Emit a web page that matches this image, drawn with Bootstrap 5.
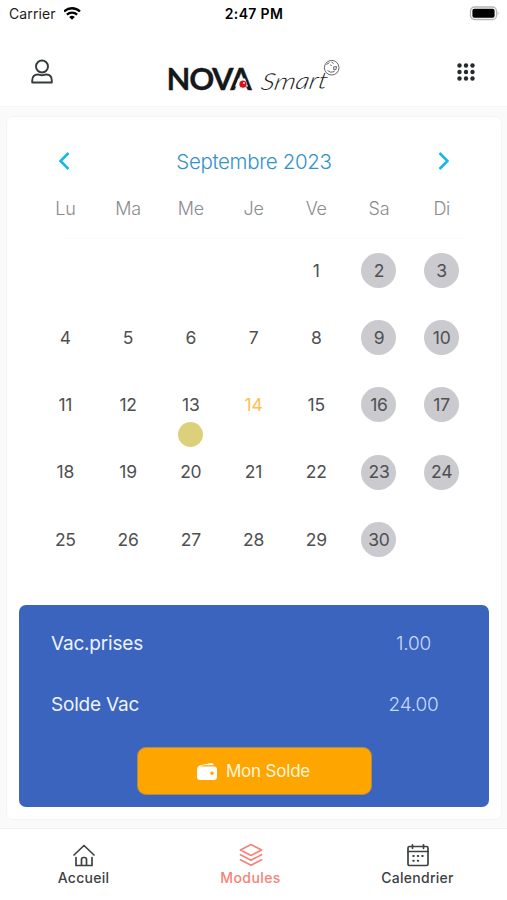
<!DOCTYPE html>
<html lang="fr">
<head>
<meta charset="utf-8">
<meta name="viewport" content="width=device-width, initial-scale=1">
<title>Nova Smart</title>
<link href="https://cdn.jsdelivr.net/npm/bootstrap@5.3.0/dist/css/bootstrap.min.css" rel="stylesheet">
<style>
body{font-family:Inter,"Liberation Sans",sans-serif;height:900px;background:#fafafa;color:#505052;overflow:hidden}
svg{display:block;flex:none}
.status{height:28px;padding:0 8px 0 9px;font-size:14px;line-height:28px;color:#1c1c1c}
.status-time{color:#000;font-size:14px;letter-spacing:.35px}
.carrier{letter-spacing:.1px}
.topbar{height:79px;padding:9px 31px 0 30px;border-bottom:1px solid #f4f5f6}
.panel{margin:9px 5px 0 6px;height:704px;border:1px solid #f3f4f5;border-radius:7px}
.month-bar{height:38px;margin-top:25px;padding:0 51px 0 51px}
.month{font-size:20.5px;font-weight:300;color:#3191cc;letter-spacing:-.35px;padding-top:2px}
.weeks{margin:0 28px 0 27px}
.dow{height:46px;padding-top:14px;font-size:18px;line-height:30px;font-weight:300;color:#8b8b8d;letter-spacing:-.3px}
.rule{height:1px;margin:12px 9px 14px 32px;background:#fafafb}
.week{height:67.2px;font-size:17.5px;letter-spacing:-.2px}
.day{width:35px;height:35px;padding-top:1px}
.off{background:#cacacf}
.today{color:#fcbf55}
.event{width:25px;height:25px;margin-top:-.5px;background:#dcd17a}
.balance{margin:auto 12px 12px;height:202px;background:#3a64bd;border-radius:7px;color:#edf3ff;font-size:19px;letter-spacing:-.2px;padding:9px 32px 12px}
.line{height:61px}
.amount{width:87px;color:#c9d9fa;font-weight:300}
.btn-solde,.btn-solde:hover{width:235px;height:48px;background:#ffa500;color:#fff6df;border:1px solid #ae8c4a;border-radius:9px;font-size:17px;letter-spacing:-.2px;padding:1px 2px 0 0}
.tabs{height:72px;border-top:1px solid #eef0f0;padding:13px 6px 0 0;font-size:14px;font-weight:500;color:#3d4142}
.tabs span{line-height:18px;letter-spacing:.25px;margin-top:1px}
.tab-on{color:#f58378}
.tab-on span{letter-spacing:.4px}
</style>
</head>
<body class="d-flex flex-column">
<header class="bg-white">
  <div class="status d-flex align-items-center">
    <div class="col d-flex align-items-center gap-2"><span class="carrier">Carrier</span>
      <svg width="18" height="14" viewBox="0 0 18 14" fill="none" stroke="#000" stroke-width="2.3"><path d="M0 4.500a11.500 11.500 0 0 1 16 0M2.900 7.600a7.400 7.400 0 0 1 10.200 0"/><path d="M8 12.700 5.200 10a4.200 4.200 0 0 1 5.600 0Z" fill="#000" stroke="none"/></svg>
    </div>
    <div class="status-time fw-semibold">2:47 PM</div>
    <div class="col d-flex justify-content-end">
      <svg width="30" height="16" viewBox="0 0 30 16"><rect x="1.500" y="1" width="26" height="12.500" rx="4" fill="#fff" stroke="#b5b5b5" stroke-width="1.300"/><rect x="3.400" y="2.800" width="22.200" height="8.900" rx="2" fill="#000"/><path d="M28.700 5.300q1.600 2 0 4z" fill="#a7a7a7"/></svg>
    </div>
  </div>
  <div class="topbar d-flex align-items-center justify-content-between">
    <svg width="24" height="28" viewBox="0 0 24 28" fill="none" stroke="#343b3c" stroke-width="1.900"><circle cx="12" cy="8.500" r="6"/><path d="M2.200 24.500v-2c0-4 2.300-6 5.600-6 1.600 0 2.400 .8 4.200 .8s2.600-.8 4.200-.8c3.300 0 5.600 2 5.600 6v2z" stroke-linejoin="round"/></svg>
    <svg width="184" height="60" viewBox="0 -8 184 60">
      <text x="3.500 26.300 49 67.300" y="39.500" font-family="Lato,sans-serif" font-size="31" font-weight="700" fill="#15191b" stroke="#15191b" stroke-width=".3" stroke-linejoin="round">NOVA</text>
      <path d="M75.300 28.500h6.800l2.900 8h-13z" fill="#fff"/>
      <circle cx="80" cy="34.200" r="3.600" fill="#d9141e"/><circle cx="81" cy="33" r=".9" fill="#fff"/>
      <text transform="translate(97 40) rotate(-1.500) scale(1.300 1) skewX(-10)" font-family="Lato,sans-serif" font-size="23" font-weight="300" font-style="italic" fill="#222" textLength="51" lengthAdjust="spacingAndGlyphs">Smart</text>
      <g fill="none" stroke="#555" stroke-width=".9"><circle cx="168.700" cy="17.700" r="7.300"/><path d="M163.500 14.500l3-2M168.500 12l2 1.500M170.500 17l3-.5-.5 3-2 .5zM167.500 14.500l1 1.500M164.500 20.500q3 3 7 1"/></g>
    </svg>
    <svg width="20" height="20" viewBox="0 0 20 20" fill="#252a2b"><circle cx="3.500" cy="3.500" r="2.200"/><circle cx="10" cy="3.500" r="2.200"/><circle cx="16.500" cy="3.500" r="2.200"/><circle cx="3.500" cy="10" r="2.200"/><circle cx="10" cy="10" r="2.200"/><circle cx="16.500" cy="10" r="2.200"/><circle cx="3.500" cy="16.500" r="2.200"/><circle cx="10" cy="16.500" r="2.200"/><circle cx="16.500" cy="16.500" r="2.200"/></svg>
  </div>
</header>
<main class="panel bg-white d-flex flex-column">
  <div class="month-bar d-flex align-items-center justify-content-between">
    <svg width="12" height="18" viewBox="0 0 12 18" fill="none" stroke="#16b8e8" stroke-width="2.500"><path d="M10.500 1 2.500 9l8 8"/></svg>
    <span class="month">Septembre 2023</span>
    <svg width="12" height="18" viewBox="0 0 12 18" fill="none" stroke="#16b8e8" stroke-width="2.500"><path d="M1.500 1l8 8-8 8"/></svg>
  </div>
  <div class="weeks">
    <div class="dow row g-0 text-center"><div class="col">Lu</div><div class="col">Ma</div><div class="col">Me</div><div class="col">Je</div><div class="col">Ve</div><div class="col">Sa</div><div class="col">Di</div></div>
    <div class="rule"></div>
    <div id="days"></div>
  </div>
  <section class="balance d-flex flex-column">
    <div class="line d-flex align-items-center justify-content-between"><span>Vac.prises</span><span class="amount text-center">1.00</span></div>
    <div class="line d-flex align-items-center justify-content-between"><span>Solde Vac</span><span class="amount text-center">24.00</span></div>
    <button class="btn btn-solde d-flex align-items-center justify-content-center gap-2 mx-auto mt-auto">
      <svg width="22" height="20" viewBox="0 0 22 20" fill="#fff"><path d="M1.500 5.500Q2 3.500 4.500 3.200L15 1.100q2.500-.2 2.700 2.200H7L4 5z"/><path fill-rule="evenodd" d="M4 4.500h14q3 0 3 3v7.500q0 3-3 3H4q-3 0-3-3V7.500q0-3 3-3zm12 5a1.700 1.700 0 1 0 .01 0z"/></svg>
      <span>Mon Solde</span>
    </button>
  </section>
</main>
<nav class="tabs bg-white mt-auto row g-0 text-center">
  <div class="col d-flex flex-column align-items-center"><svg width="24" height="26" viewBox="0 0 24 26" fill="none" stroke="#3d4142" stroke-width="1.700" stroke-linecap="round" stroke-linejoin="round"><path d="M2 13 12 3.500 22 13M4 15.500V23.500h16v-8M9.500 23.500v-6q0-2 2-2h1q2 0 2 2v6"/></svg><span>Accueil</span></div>
  <div class="col tab-on d-flex flex-column align-items-center"><svg width="24" height="26" viewBox="0 0 24 26" fill="none" stroke="#f58378" stroke-width="1.700" stroke-linejoin="round" stroke-linecap="round"><path d="M12 2.500 22.500 8 12 13.500 1.500 8zM1.500 12.700 12 18.200l10.500-5.500M1.500 17.800 12 23.300l10.500-5.500"/></svg><span>Modules</span></div>
  <div class="col d-flex flex-column align-items-center"><svg width="24" height="26" viewBox="0 0 24 26" fill="none" stroke="#3d4142" stroke-width="1.700" stroke-linecap="round"><rect x="2" y="4.500" width="20" height="19" rx="1.500"/><path d="M2 9.500h20M6.500 2.800v3.500M17.500 2.800v3.500"/><path d="M7.200 14h.6M11.700 14h.6M16.200 14h.6M7.200 18.800h.6M11.700 18.800h.6" stroke-width="1.900"/></svg><span>Calendrier</span></div>
</nav>
<script src="https://cdn.jsdelivr.net/npm/bootstrap@5.3.0/dist/js/bootstrap.bundle.min.js"></script>
<script>
// September 2023 starts on a Friday: four empty cells come first.
const days = document.getElementById('days');
for (let w = 0; w < 5; w++) {
  let cells = '';
  for (let c = 0; c < 7; c++) {
    const n = w * 7 + c - 3;
    const shown = n >= 1 && n <= 30;
    const cls = shown && c > 4 ? ' off' : n === 14 ? ' today' : '';
    cells += '<div class="col d-flex flex-column align-items-center">' +
      (shown ? '<div class="day rounded-circle d-flex align-items-center justify-content-center' + cls + '">' + n + '</div>' : '') +
      (n === 13 ? '<div class="event rounded-circle"></div>' : '') + '</div>';
  }
  days.innerHTML += '<div class="week row g-0">' + cells + '</div>';
}
</script>
</body>
</html>
